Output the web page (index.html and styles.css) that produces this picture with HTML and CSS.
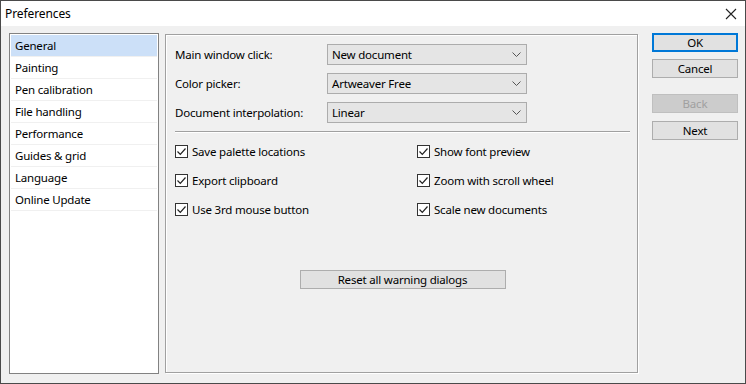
FILE: index.html
```html
<!DOCTYPE html>
<html>
<head>
<meta charset="utf-8">
<title>Preferences</title>
<link rel="stylesheet" href="styles.css">
</head>
<body>
<div class="window">
  <div class="titlebar">
    <span class="title">Preferences</span>
    <svg class="close" width="12" height="12" viewBox="0 0 12 12"><path d="M1 1 L11 11 M11 1 L1 11" stroke="#222" stroke-width="1.1" fill="none"/></svg>
  </div>
  <div class="body">
    <ul class="list">
      <li class="item selected">General</li>
      <li class="item">Painting</li>
      <li class="item">Pen calibration</li>
      <li class="item">File handling</li>
      <li class="item">Performance</li>
      <li class="item">Guides &amp; grid</li>
      <li class="item">Language</li>
      <li class="item">Online Update</li>
    </ul>
    <div class="panel">
      <div class="fields">
        <div class="field">
          <span class="label">Main window click:</span>
          <div class="combo"><span>New document</span><svg class="chev" width="9" height="5" viewBox="0 0 9 5"><path d="M0.5 0.5 L4.5 4.5 L8.5 0.5" stroke="#555" fill="none"/></svg></div>
        </div>
        <div class="field">
          <span class="label">Color picker:</span>
          <div class="combo"><span>Artweaver Free</span><svg class="chev" width="9" height="5" viewBox="0 0 9 5"><path d="M0.5 0.5 L4.5 4.5 L8.5 0.5" stroke="#555" fill="none"/></svg></div>
        </div>
        <div class="field">
          <span class="label">Document interpolation:</span>
          <div class="combo"><span>Linear</span><svg class="chev" width="9" height="5" viewBox="0 0 9 5"><path d="M0.5 0.5 L4.5 4.5 L8.5 0.5" stroke="#555" fill="none"/></svg></div>
        </div>
      </div>
      <div class="sep"></div>
      <div class="checks">
        <label class="check"><span class="box"><svg width="11" height="11" viewBox="0 0 11 11"><path d="M1.5 5.5 L4.3 8.3 L9.5 2.5" stroke="#222" stroke-width="1.2" fill="none"/></svg></span>Save palette locations</label>
        <label class="check"><span class="box"><svg width="11" height="11" viewBox="0 0 11 11"><path d="M1.5 5.5 L4.3 8.3 L9.5 2.5" stroke="#222" stroke-width="1.2" fill="none"/></svg></span>Show font preview</label>
        <label class="check"><span class="box"><svg width="11" height="11" viewBox="0 0 11 11"><path d="M1.5 5.5 L4.3 8.3 L9.5 2.5" stroke="#222" stroke-width="1.2" fill="none"/></svg></span>Export clipboard</label>
        <label class="check"><span class="box"><svg width="11" height="11" viewBox="0 0 11 11"><path d="M1.5 5.5 L4.3 8.3 L9.5 2.5" stroke="#222" stroke-width="1.2" fill="none"/></svg></span>Zoom with scroll wheel</label>
        <label class="check"><span class="box"><svg width="11" height="11" viewBox="0 0 11 11"><path d="M1.5 5.5 L4.3 8.3 L9.5 2.5" stroke="#222" stroke-width="1.2" fill="none"/></svg></span>Use 3rd mouse button</label>
        <label class="check"><span class="box"><svg width="11" height="11" viewBox="0 0 11 11"><path d="M1.5 5.5 L4.3 8.3 L9.5 2.5" stroke="#222" stroke-width="1.2" fill="none"/></svg></span>Scale new documents</label>
      </div>
      <div class="reset-row"><button class="btn reset">Reset all warning dialogs</button></div>
    </div>
    <div class="buttons">
      <button class="btn default">OK</button>
      <button class="btn cancel">Cancel</button>
      <button class="btn back" disabled>Back</button>
      <button class="btn next">Next</button>
    </div>
  </div>
</div>
</body>
</html>
```
FILE: styles.css
```css
* { box-sizing: border-box; }
html, body { margin: 0; padding: 0; }
body {
  width: 746px;
  height: 384px;
  font-family: "Noto Sans", "Open Sans", sans-serif;
  font-size: 11.5px;
  letter-spacing: -0.2px;
  color: #000;
  overflow: hidden;
}
.window {
  width: 746px;
  height: 384px;
  border: 1px solid #4a4a4a;
  display: flex;
  flex-direction: column;
  background: #f0f0f0;
}
.titlebar {
  height: 25px;
  background: #fff;
  display: flex;
  align-items: center;
  justify-content: space-between;
  padding: 0 8px 0 4px;
  flex: none;
}
.title { font-size: 12px; letter-spacing: -0.1px; }
.close { display: block; }
.body {
  flex: 1;
  display: flex;
  align-items: flex-start;
  padding: 7px 0 0 8px;
}
.list {
  list-style: none;
  margin: 0;
  padding: 1px;
  width: 150px;
  height: 341px;
  background: #fff;
  border: 1px solid #828282;
  flex: none;
}
.item {
  height: 22px;
  line-height: 21px;
  padding-left: 4px;
  border-bottom: 1px solid #f0f0f0;
}
.item.selected { background: #cce0f8; }
.panel {
  margin: 1px 0 0 6px;
  width: 473px;
  height: 339px;
  border: 1px solid #a0a0a0;
  box-shadow: 1px 1px 0 #fff, inset 1px 1px 0 #fff;
  padding: 9px 7px 0 9px;
  flex: none;
  display: flex;
  flex-direction: column;
}
.fields { display: flex; flex-direction: column; gap: 8px; }
.field { display: flex; align-items: center; height: 21px; }
.label { width: 152px; flex: none; }
.combo {
  width: 200px;
  height: 21px;
  background: #e5e5e5;
  border: 1px solid #acacac;
  display: flex;
  align-items: center;
  justify-content: space-between;
  padding: 0 5px 0 4px;
}
.chev { display: block; }
.sep {
  margin-top: 8px;
  height: 2px;
  border-top: 1px solid #a0a0a0;
  border-bottom: 1px solid #fff;
}
.checks {
  margin-top: 8px;
  display: grid;
  grid-template-columns: 242px 1fr;
  row-gap: 9px;
}
.check { display: flex; align-items: center; height: 20px; }
.box {
  width: 13px;
  height: 13px;
  border: 1px solid #333;
  background: #fff;
  margin-right: 4px;
  display: flex;
  align-items: center;
  justify-content: center;
  flex: none;
}
.box svg { display: block; }
.reset-row { display: flex; justify-content: center; margin-top: 51px; }
.btn {
  font-family: inherit;
  font-size: 11.5px;
  letter-spacing: -0.2px;
  color: #000;
  height: 19px;
  padding: 0;
  background: #e1e1e1;
  border: 1px solid #adadad;
  border-radius: 0;
  line-height: 17px;
}
.reset { width: 206px; }
.buttons {
  margin-left: 14px;
  width: 86px;
  display: flex;
  flex-direction: column;
  flex: none;
}
.buttons .btn { width: 86px; }
.default { border: 2px solid #0078d7; line-height: 15px; }
.cancel { margin-top: 7px; }
.back { margin-top: 16px; background: #cccccc; border-color: #bfbfbf; color: #a0a0a0; }
.next { margin-top: 8px; }
```
